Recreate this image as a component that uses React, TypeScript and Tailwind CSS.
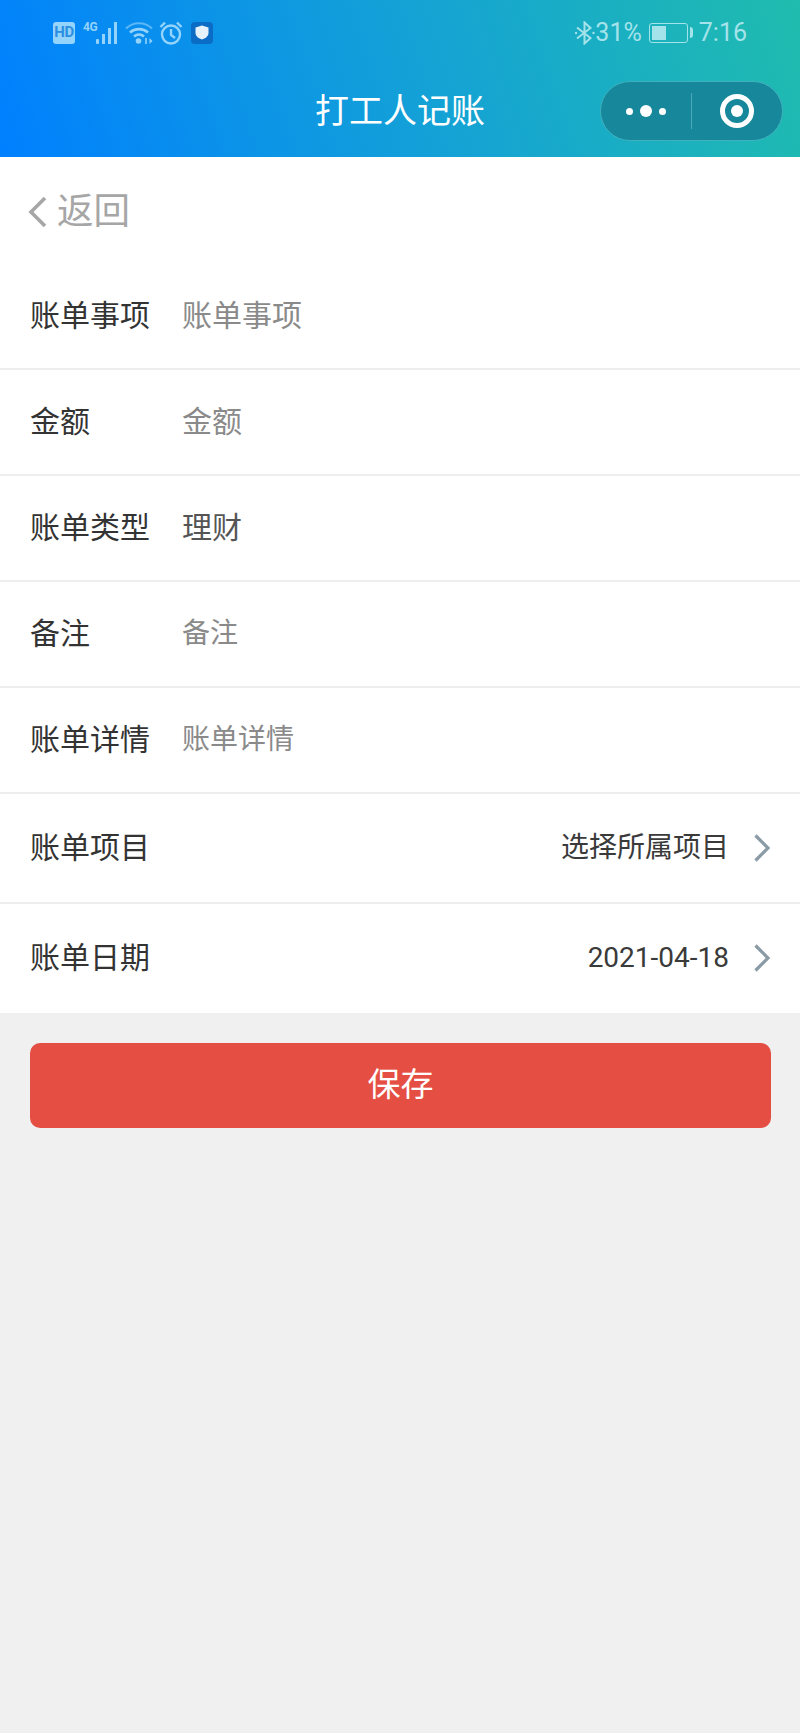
const inputRows = [
  { label: '账单事项', value: '账单事项', size: 'text-[30px]', color: 'text-[#8a8a8a]' },
  { label: '金额', value: '金额', size: 'text-[30px]', color: 'text-[#8a8a8a]' },
  { label: '账单类型', value: '理财', size: 'text-[30px]', color: 'text-[#555555]' },
  { label: '备注', value: '备注', size: 'text-[28px]', color: 'text-[#8a8a8a]' },
  { label: '账单详情', value: '账单详情', size: 'text-[28px]', color: 'text-[#8a8a8a]' },
];

const pickerRows = [
  { label: '账单项目', value: '选择所属项目', height: 'h-[110px] border-b-2 border-[#eeeeee]' },
  { label: '账单日期', value: '2021-04-18', height: 'h-[109px]' },
];

const StatusLeft = () => (
  <div className="flex items-center text-[#94d3fb]">
    <div className="flex h-[22px] w-[22px] items-center justify-center rounded-[3px] bg-[#94d3fb] font-['Roboto',sans-serif] text-[15px] font-bold leading-none tracking-[-0.5px] text-[#2a8fe0]">
      HD
    </div>
    <div className="ml-2 flex h-[22px] items-start">
      <span className="font-['Roboto',sans-serif] text-[12px] font-bold leading-[11px] tracking-[-0.3px]">4G</span>
      <svg width="25" height="22" viewBox="0 0 25 22" className="-ml-[1px]" fill="currentColor">
        <rect x="0" y="17" width="3" height="5" rx="1" />
        <rect x="6" y="12" width="3" height="10" />
        <rect x="12" y="6" width="3" height="16" />
        <rect x="18" y="0" width="3" height="22" />
      </svg>
    </div>
    <svg width="28" height="24" viewBox="0 0 28 24" className="ml-[4px]" fill="none" stroke="currentColor">
      <path d="M1 7.500C8 0.500 20 0.500 27 7.500" strokeWidth="2.200" opacity="0.6" />
      <path d="M5 11.500C10 7 18 7 23 11.500" strokeWidth="2.600" />
      <path d="M9 15.500C12 13 16 13 19 15.500" strokeWidth="2.600" />
      <circle cx="13.500" cy="20" r="2.800" fill="currentColor" stroke="none" />
      <path d="M21 17v6" strokeWidth="1.600" />
      <path d="M24.500 17l3 3-3 3z" fill="currentColor" stroke="none" />
    </svg>
    <svg width="24" height="24" viewBox="0 0 24 24" className="ml-[6px]" fill="none" stroke="currentColor" strokeWidth="2.400">
      <circle cx="12" cy="13.500" r="9" />
      <path d="M12 8v6l4 3M1.500 6L6 1.500M22.500 6L18 1.500" />
    </svg>
    <div className="ml-2 flex h-[22px] w-[22px] items-center justify-center rounded-[4px] bg-[#0a6cc4]">
      <svg width="14" height="15" viewBox="0 0 14 15">
        <path d="M7 0.500L13.500 2.500V8C13.500 11.500 10 13.500 7 14.500C4 13.500 0.500 11.500 0.500 8V2.500Z" fill="#e6f2fb" />
      </svg>
    </div>
  </div>
);

const StatusRight = () => (
  <div className="flex items-center font-['Roboto',sans-serif] text-[25px] leading-none text-[#a5e3ea]">
    <svg width="20" height="24" viewBox="0 0 20 24" fill="none" stroke="currentColor" strokeWidth="2">
      <path d="M2 6.500L15.500 17L9.500 22.500V1.500L15.500 7L2 17.500" />
      <circle cx="1" cy="12" r="1.200" fill="currentColor" stroke="none" />
      <circle cx="18.500" cy="12" r="1.200" fill="currentColor" stroke="none" />
    </svg>
    <span>31%</span>
    <div className="ml-[7px] flex h-5 w-[39px] items-center rounded-[3px] border border-[#a5e3ea] p-[2px]">
      <div className="h-full w-[14px] bg-[#a5e3ea]" />
    </div>
    <div className="ml-[2px] h-[11px] w-[3px] rounded-r-sm bg-[#a5e3ea]" />
    <span className="ml-[6px]">7:16</span>
  </div>
);

const Capsule = () => (
  <div className="flex h-[60px] w-[183px] items-center rounded-full border border-[#3fb0bc] bg-[#17889c]">
    <div className="flex w-[90px] items-center justify-center gap-[7px]">
      <span className="h-[7px] w-[7px] rounded-full bg-white" />
      <span className="h-3 w-3 rounded-full bg-white" />
      <span className="h-[7px] w-[7px] rounded-full bg-white" />
    </div>
    <div className="h-9 w-px bg-[#4aa9b5]" />
    <div className="flex flex-1 items-center justify-center">
      <div className="flex h-[34px] w-[34px] items-center justify-center rounded-full border-[5px] border-white">
        <span className="h-3 w-3 rounded-full bg-white" />
      </div>
    </div>
  </div>
);

export default function App() {
  return (
    <div className="flex min-h-[1733px] flex-col bg-[#f0f0f0] font-['Roboto','Noto_Sans_CJK_SC',sans-serif]">
      <header className="h-[157px] bg-[linear-gradient(72deg,#0080ff_0%,#15a3d4_55%,#20bcae_100%)]">
        <div className="flex items-center justify-between px-[53px] pt-[20px]">
          <StatusLeft />
          <StatusRight />
        </div>
        <div className="relative mt-[33px] flex h-[66px] items-center justify-center">
          <h1 className="text-[34px] font-normal leading-none text-white">打工人记账</h1>
          <div className="absolute right-[17px] top-[3px]">
            <Capsule />
          </div>
        </div>
      </header>

      <div className="bg-white">
        <div className="flex h-[107px] items-center pl-[28px] pt-[3px] text-[#a6a6a6]">
          <svg width="20" height="32" viewBox="0 0 20 32" fill="none" stroke="currentColor" strokeWidth="3.600">
            <path d="M17 2L3 16L17 30" />
          </svg>
          <span className="ml-[9px] text-[36.500px] leading-none">返回</span>
        </div>

        {inputRows.map(row => (
          <div key={row.label} className="flex h-[106px] items-center border-b-2 border-[#eeeeee] pl-[30px]">
            <span className="w-[152px] shrink-0 text-[30px] leading-none text-[#333333]">{row.label}</span>
            <span className={`${row.size} ${row.color} leading-none`}>{row.value}</span>
          </div>
        ))}

        {pickerRows.map(row => (
          <div key={row.label} className={`flex ${row.height} items-center justify-between pb-[1px] pl-[30px] pr-[29px]`}>
            <span className="text-[30px] leading-none text-[#333333]">{row.label}</span>
            <div className="flex items-center">
              <span className="text-[28px] leading-none text-[#3a3a3a]">{row.value}</span>
              <svg width="18" height="30" viewBox="0 0 18 30" className="ml-[24px] text-[#8a9ba5]" fill="none" stroke="currentColor" strokeWidth="3.200">
                <path d="M2.500 2.500L15 15L2.500 27.500" />
              </svg>
            </div>
          </div>
        ))}
      </div>

      <div className="px-[30px] pt-[30px]">
        <button className="flex h-[85px] w-[741px] items-center justify-center rounded-[10px] bg-[#e54e43] pb-[3px] text-[33px] leading-none text-white">
          保存
        </button>
      </div>
    </div>
  );
}
